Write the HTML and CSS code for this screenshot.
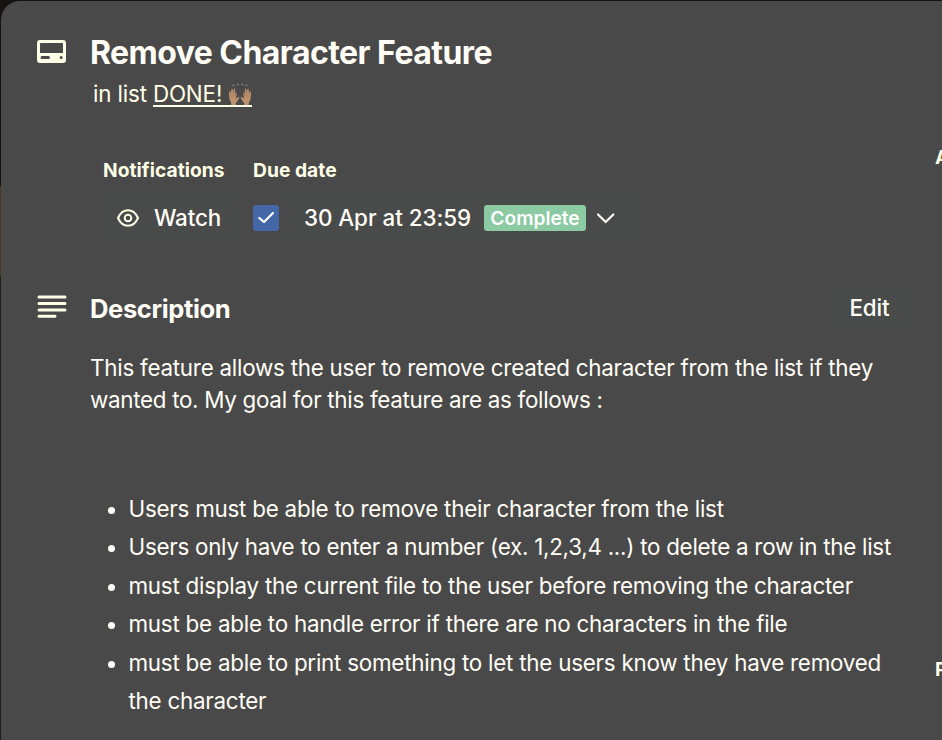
FILE: index.html
```html
<!DOCTYPE html>
<html lang="en">
<head>
<meta charset="utf-8">
<title>Remove Character Feature</title>
<link rel="stylesheet" href="styles.css">
</head>
<body>
<div class="dialog">
  <main class="main">
    <header class="header">
      <svg class="icon" viewBox="0 0 30 24"><path fill="currentColor" fill-rule="evenodd" d="M3 1H26A3 3 0 0 1 29 4V21A3 3 0 0 1 26 24H3A3 3 0 0 1 0 21V4A3 3 0 0 1 3 1ZM3.800 4Q3 4 3 4.800V14H26V4.800Q26 4 25.200 4ZM5 17A1.500 1.500 0 0 0 5 20H11.500A1.500 1.500 0 0 0 11.500 17ZM24.200 17A1.500 1.500 0 1 0 24.200 20A1.500 1.500 0 1 0 24.200 17Z"/></svg>
      <div>
        <h1 class="title">Remove Character Feature</h1>
        <p class="location">in list <a class="list-link">DONE! <svg class="hands" viewBox="0 0 24 24" role="img" aria-label="raised hands"><g id="hand"><path fill="#bd906e" d="M1 9Q1.500 7.500 2.200 9L2.800 11L3.300 6.500Q4 5 4.800 6.500L5 10L6 5.800Q7 5 7.200 6.500L7 11L8 9.500Q8.900 9.500 8.600 11L8 16Q9.500 13.700 11 14Q11.600 14.500 10.800 15.700Q9.500 18.500 7.800 20V22H3.300L3 19.500Q1.200 17 1.200 14Z"/><path fill="none" stroke="#98704f" stroke-width=".5" d="M3 11.500V14M5 10V14M7 11V14"/></g><use href="#hand" transform="matrix(-1 0 0 1 24 0)"/><g fill="#898e91"><circle cx="5.400" cy="2.300" r=".9"/><circle cx="9.600" cy="1.300" r=".9"/><circle cx="14.400" cy="1.300" r=".9"/><circle cx="18.600" cy="2.300" r=".9"/></g></svg></a></p>
      </div>
    </header>

    <div class="details">
      <section class="detail">
        <h2 class="label label-notifications">Notifications</h2>
        <button class="button watch"><svg class="eye" viewBox="0 0 22 18" fill="none" stroke="currentColor" stroke-width="2"><path d="M1 9C3.300 3.800 6.800 1.300 11 1.300S18.700 3.800 21 9C18.700 14.200 15.200 16.700 11 16.700S3.300 14.200 1 9Z"/><circle cx="11" cy="9" r="3.300"/></svg><span>Watch</span></button>
      </section>
      <section class="detail">
        <h2 class="label label-due">Due date</h2>
        <div class="due">
          <span class="checkbox"><svg viewBox="0 0 26 26"><path fill="none" stroke="#fff" stroke-width="2.200" stroke-linecap="round" stroke-linejoin="round" d="M6.300 13L11 17L20 8"/></svg></span>
          <button class="button date"><span class="date-text">30 Apr at 23:59</span><span class="badge">Complete</span><svg class="chevron" viewBox="0 0 20 14"><path fill="none" stroke="currentColor" stroke-width="2.200" stroke-linecap="round" stroke-linejoin="round" d="M2 3.500L9.700 11L17.300 3.500"/></svg></button>
        </div>
      </section>
    </div>

    <section class="description">
      <div class="description-head">
        <svg class="icon" viewBox="0 0 30 24"><g stroke="currentColor" stroke-width="3" stroke-linecap="round"><path d="M2 2H28M2 8.500H28M2 14.900H28M2 21.300H18"/></g></svg>
        <h2 class="description-title">Description</h2>
        <button class="button edit">Edit</button>
      </div>
      <div class="copy">
        <p class="intro">This feature allows the user to remove created character from the list if they<br><span class="intro-end">wanted to. My goal for this feature are as follows :</span></p>
        <ul class="goals">
          <li>Users must be able to remove their character from the list</li>
          <li class="numeric">Users only have to enter a number (ex. 1,2,3,4 ...) to delete a row in the list</li>
          <li>must display the current file to the user before removing the character</li>
          <li>must be able to handle error if there are no characters in the file</li>
          <li>must be able to print something to let the users know they have removed<br>the character</li>
        </ul>
      </div>
    </section>
  </main>
  <aside class="sidebar">
    <h3 class="side-label">Add to card</h3>
    <h3 class="side-label">Power-Ups</h3>
  </aside>
</div>
</body>
</html>
```

FILE: styles.css
```css
* { box-sizing: border-box; }
body {
  margin: 0;
  height: 740px;
  overflow: hidden;
  padding: 1px 0 0 1px;
  background: linear-gradient(#151310 0 186px, #493920 186px 276px, #201d15 276px);
  color: #fffdf5;
  font: 22.4px/32px Inter, "Liberation Sans", sans-serif;
}
h1, h2, h3, p, ul { margin: 0; padding: 0; }
svg { display: block; }
.dialog {
  display: grid;
  grid-template-columns: 908px 1fr;
  column-gap: 26px;
  height: 739px;
  overflow: hidden;
  border-top-left-radius: 19px;
  background: #494949;
}
.main { padding: 33px 0 0 36px; min-width: 0; }
.header, .description-head { display: flex; }
.icon { flex: none; width: 30px; height: 24px; margin-right: 23px; color: #ffffe8; }
.header .icon { margin-top: 5px; }
.title { font-size: 32px; line-height: 38px; font-weight: 680; letter-spacing: -.55px; white-space: nowrap; }
.location { display: flex; gap: 6px; margin-left: 3px; padding-top: 6px; color: #ffffe6; letter-spacing: -.15px; line-height: 31px; }
.list-link { display: flex; height: 29px; line-height: 31px; border-bottom: 2px solid #ffffe6; margin-bottom: 3px; }
.hands { width: 24px; height: 24px; margin: 5px 0 0 6px; }
.details { display: flex; gap: 13px; margin: 44px 0 0 66px; }
.label { font-size: 19.2px; line-height: 32px; font-weight: 650; color: #ffffe6; letter-spacing: .05px; white-space: nowrap; }
.button {
  display: flex; align-items: center;
  height: 51px; padding: 0; border: 0; border-radius: 4px;
  background: #494b4a; color: #fffdf5;
  font: 550 22.4px/32px Inter, "Liberation Sans", sans-serif;
  letter-spacing: -.15px; white-space: nowrap;
}
.detail .button { margin-top: 6px; }
.watch { width: 137px; padding-left: 14px; }
.eye { width: 22px; height: 18px; margin-right: 15px; color: #ffffe6; }
.due { display: flex; }
.checkbox { width: 26px; height: 26px; margin: 19px 6px 0 0; border-radius: 3px; background: #4467a8; }
.date { width: 353px; padding-left: 18px; }
.date-text { width: 169px; letter-spacing: -.03px; }
.badge { width: 102px; height: 26px; margin: 0 10px 0 12px; border-radius: 3px; background: #8bcaa2; color: #fff; font-size: 19.2px; font-weight: 570; line-height: 26px; letter-spacing: 0; text-align: center; }
.chevron { width: 20px; height: 14px; }
.description { margin-top: 40px; }
.description-head { height: 51px; }
.description-head .icon { margin-top: 12px; }
.description-title { font-size: 25.600px; line-height: 51px; font-weight: 680; letter-spacing: -.4px; }
.edit { margin-left: auto; width: 76px; height: 50px; padding-right: 3px; justify-content: center; }
.copy { padding: 18px 0 0 53px; font-weight: 430; letter-spacing: -.245px; white-space: nowrap; }
.intro-end { letter-spacing: -.3px; }
.goals { list-style: none; padding: 74px 0 0 38.500px; line-height: 38.400px; }
.goals li { position: relative; letter-spacing: -.24px; }
.goals .numeric { letter-spacing: -.265px; }
.goals li::before { content: ""; position: absolute; left: -21px; top: 17px; width: 7px; height: 7px; border-radius: 50%; background: currentColor; }
.sidebar { display: grid; grid-template-rows: 512px auto; align-content: start; padding-top: 140px; overflow: hidden; }
.side-label { font-size: 19.200px; line-height: 32px; font-weight: 650; color: #ffffe6; white-space: nowrap; }
```
